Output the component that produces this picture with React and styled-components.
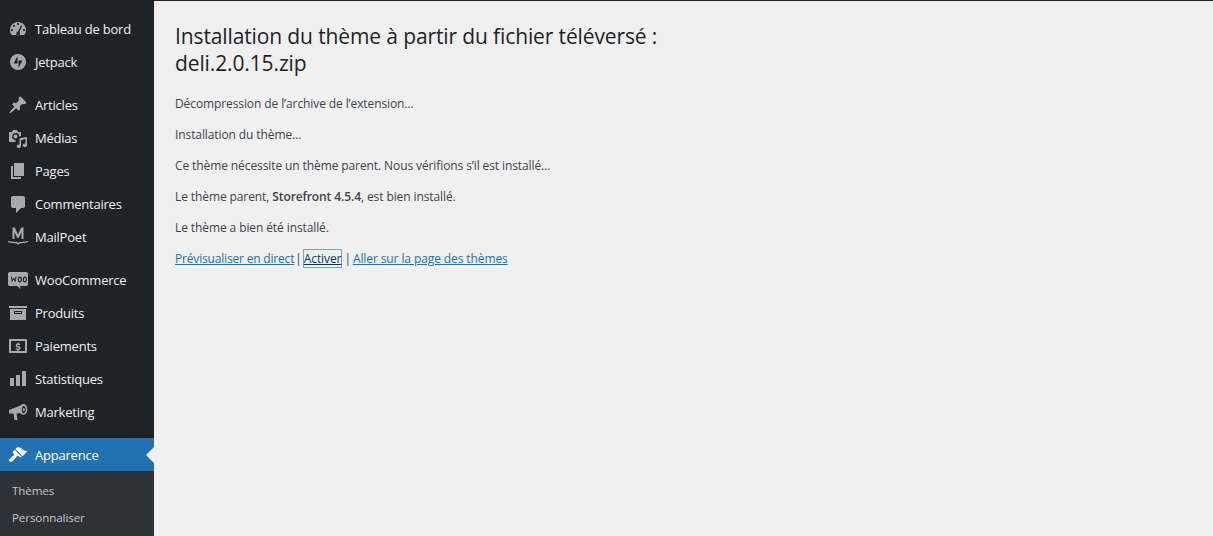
import React from 'react';
import styled, { createGlobalStyle } from 'styled-components';

const GlobalStyle = createGlobalStyle`
  html, body {
    margin: 0;
    padding: 0;
    height: 100%;
    overflow: hidden;
    background: #f0f0f1;
  }
  body {
    font-family: "Open Sans", "Noto Sans", "Liberation Sans", sans-serif;
    -webkit-font-smoothing: antialiased;
  }
`;

const Page = styled.div`
  display: flex;
  width: 1213px;
  height: 536px;
  overflow: hidden;
`;

const Sidebar = styled.nav`
  flex: 0 0 154px;
  height: 536px;
  background: #1d2327;
  padding-top: 12px;
  box-sizing: border-box;
  overflow: hidden;
`;

const MenuGroup = styled.ul`
  list-style: none;
  margin: 0 0 10px;
  padding: 0;
`;

const MenuItem = styled.li`
  position: relative;
  display: flex;
  align-items: center;
  height: 33px;
  font-size: 13px;
  letter-spacing: -0.22px;
  color: ${(p) => (p.$active ? '#fff' : '#f0f0f1')};
  background: ${(p) => (p.$active ? '#2271b1' : 'transparent')};

  ${(p) =>
    p.$active &&
    `
    &::after {
      content: '';
      position: absolute;
      right: 0;
      top: 50%;
      margin-top: -8px;
      border: 8px solid transparent;
      border-right-color: #f0f0f1;
      border-left-width: 0;
    }
  `}
`;

const IconSlot = styled.span`
  flex: 0 0 35px;
  display: flex;
  justify-content: center;
  color: ${(p) => (p.$active ? '#fff' : '#a7aaad')};

  svg {
    display: block;
    width: 20px;
    height: 20px;
    fill: currentColor;
  }
`;

const SubMenu = styled.ul`
  list-style: none;
  margin: -10px 0 0;
  padding: 6px 0 0;
  background: #2c3338;
  height: 80px;
`;

const SubItem = styled.li`
  height: 27px;
  line-height: 27px;
  padding-left: 12px;
  font-size: 11.6px;
  letter-spacing: -0.1px;
  color: #c3c4c7;
`;

const Content = styled.main`
  flex: 1;
  min-width: 0;
  border-top: 1px solid #1d2327;
  padding: 0 21px;
  color: #3c434a;
  font-size: 12px;
  letter-spacing: -0.1px;
`;

const Title = styled.h1`
  margin: 22px 0 0;
  max-width: 500px;
  font-size: 21px;
  font-weight: 400;
  letter-spacing: -0.12px;
  line-height: 27px;
  color: #1d2327;
`;

const Line = styled.p`
  margin: 0 0 13px;
  height: 18px;
  line-height: 18px;

  strong {
    font-weight: 600;
  }
`;

const Messages = styled.div`
  margin-top: 18px;
`;

const Actions = styled.p`
  display: flex;
  align-items: center;
  margin: -1px 0 0;
  height: 18px;
  color: #3c434a;
`;

const ActionLink = styled.a`
  color: #2271b1;
  text-decoration: underline;
  letter-spacing: ${(p) => (p.$tight ? '-0.18px' : '-0.1px')};
`;

const FocusedLink = styled.a`
  color: #043959;
  text-decoration: underline;
  box-shadow: 0 0 0 1px #6ea5d8;
  margin-right: 2px;
`;

const Sep = styled.span`
  padding: 0 2px 0 1px;
`;

const icons = {
  dashboard: (
    <path d="M3.760 16h12.480A7.970 7.970 0 0 0 18 11c0-4.420-3.580-8-8-8s-8 3.580-8 8c0 1.900.660 3.630 1.760 5zM10 4c.550 0 1 .450 1 1s-.450 1-1 1-1-.450-1-1 .450-1 1-1zM6 6c.550 0 1 .450 1 1s-.450 1-1 1-1-.450-1-1 .450-1 1-1zm8.010 1l-2.600 6.020c.370.360.590.860.590 1.410A2 2 0 0 1 10 16.400a2 2 0 0 1-.030-3.970L13 6.200l1.010.8zM4 10c.550 0 1 .450 1 1s-.450 1-1 1-1-.450-1-1 .450-1 1-1zm12 0c.550 0 1 .450 1 1s-.450 1-1 1-1-.450-1-1 .450-1 1-1z" fillRule="evenodd" />
  ),
  jetpack: (
    <path d="M10 2a8 8 0 1 0 0 16 8 8 0 0 0 0-16zM9.500 11.500H5.600L9.500 4v7.500zm1 4.500V8.500h3.900L10.500 16z" fillRule="evenodd" />
  ),
  pin: (
    <path d="M10.440 3.020l1.820-1.820 6.360 6.350-1.830 1.820c-1.050-.680-2.480-.570-3.410.360l-.750.750c-.920.930-1.040 2.350-.350 3.410l-1.830 1.820-2.410-2.410-2.800 2.790c-.420.420-3.380 2.710-3.800 2.290s1.860-3.390 2.280-3.810l2.790-2.790L4.100 9.360l1.830-1.820c1.050.690 2.480.570 3.400-.360l.750-.750c.930-.920 1.050-2.350.360-3.410z" />
  ),
  media: (
    <path d="M2 4h2l1-2h4l1 2h2c.6 0 1 .4 1 1v3.200c-.6-.1-1.300 0-1.900.2A3.500 3.500 0 0 0 7.500 5 3.500 3.500 0 0 0 5.600 11.400c.6.400 1.200.6 1.900.6v2H2c-.6 0-1-.4-1-1V5c0-.6.4-1 1-1zm5.500 2.500a2 2 0 1 1 0 4 2 2 0 0 1 0-4zM19 9v8.200c0 1-1 1.800-2.200 1.800s-2.100-.8-2.100-1.800 1-1.800 2.100-1.800c.2 0 .5 0 .7.100V11l-4.500 1.200v6c0 1-1 1.800-2.200 1.800S8.700 19.200 8.700 18.200s1-1.800 2.100-1.800c.3 0 .5 0 .7.100V10.300L19 9z" fillRule="evenodd" />
  ),
  pages: (
    <path d="M6 15V2h10v13H6zm-1 1h8v2H3V5h2v11z" />
  ),
  comment: (
    <path d="M5 2h10c1.100 0 2 .9 2 2v8c0 1.100-.9 2-2 2h-2l-5 5v-5H5c-1.100 0-2-.9-2-2V4c0-1.100.9-2 2-2z" />
  ),
  mailpoet: (
    <path d="M4.500 0.500h2.300L10 7.500l3.200-7H15.500V12h-2V5l-2.900 6H9.400L6.500 5v7h-2V.5zM0 14c3.500.7 7 1 9 1.100L10 16l1-.9c2-.1 5.500-.4 9-1.100v1.300c-3.500.8-6.500 1.100-8.500 1.200L10 17.800 8.500 16.500c-2-.1-5-.4-8.500-1.200V14z" />
  ),
  woo: (
    <path d="M1.800 2h16.400C19.200 2 20 2.800 20 3.800v10.400c0 1-.8 1.800-1.800 1.800H12l.6 3-3.600-3H1.800C.8 16 0 15.200 0 14.200V3.800C0 2.800.8 2 1.800 2zM2.800 6.500l1.100 6 1.700-3.300 1.700 3.300 1.400-6H7.600l-.7 3.200-1.300-2.500-1.300 2.500-.5-3.200H2.800zm9.200 0c-1.300 0-2.200 1.300-2.200 3 0 1.700.8 3 2 3 1.300 0 2.200-1.300 2.200-3 0-1.700-.8-3-2-3zm0 1.300c.6 0 .9.700.9 1.700s-.4 1.700-1 1.700-.9-.7-.9-1.700.4-1.700 1-1.700zm5-1.300c-1.300 0-2.200 1.300-2.200 3 0 1.700.8 3 2 3 1.300 0 2.200-1.300 2.200-3 0-1.700-.8-3-2-3zm0 1.300c.6 0 .9.700.9 1.700s-.4 1.700-1 1.700-.9-.7-.9-1.700.4-1.700 1-1.700z" fillRule="evenodd" />
  ),
  archive: (
    <path d="M1 3h18v2H1V3zm1 3h16v11H2V6zm4 2v3h8V8H6zm1 1h6v1H7V9z" fillRule="evenodd" />
  ),
  payments: (
    <path d="M2 3h16c.6 0 1 .4 1 1v12c0 .6-.4 1-1 1H2c-.6 0-1-.4-1-1V4c0-.6.4-1 1-1zm1 2v10h14V5H3zm6.400 1.500h1.300v1c.7.100 1.300.300 1.800.600l-.5 1.100c-.6-.3-1.200-.5-1.900-.5-.6 0-.9.200-.9.500 0 .4.400.6 1.200.8 1.300.4 2.200.8 2.200 2 0 1-.7 1.700-1.900 1.900v1H9.400v-1c-.8-.1-1.500-.3-2-.7l.5-1.100c.6.400 1.400.7 2.100.7.600 0 1-.2 1-.6s-.4-.6-1.200-.8c-1.300-.4-2.200-.9-2.200-2 0-1 .7-1.600 1.800-1.800v-1.100z" fillRule="evenodd" />
  ),
  chart: (
    <path d="M2 9h4v8H2V9zm6-3h4v11H8V6zm6-4h4v15h-4V2z" />
  ),
  megaphone: (
    <path d="M1 8l11.500-4.500C13.500 2.500 15 1.800 16.500 2.200 18.500 2.800 19.500 5.500 19.300 8c-.2 2.500-1.500 4.500-3.300 4.700-1.200.100-2.500-.500-3.500-1.500l-4 .3 1 6.500H6.500l-1-6.500H1V8zM15.800 3.900c-1.100 0-2 1.700-2 3.800s.9 3.500 2 3.500 2-1.500 2-3.600-.9-3.700-2-3.700zM15.800 6c-.6 0-1 .8-1 1.700s.4 1.700 1 1.700 1-.8 1-1.700-.4-1.700-1-1.700z" fillRule="evenodd" />
  ),
  brush: (
    <path d="M14.480 11.060L7.410 3.990l1.500-1.500c.5-.560 2.300-.470 3.510.320 1.210.8 1.430 1.280 2.910 2.100 1.180.640 2.450 1.260 4.230.910l-4.580 5.240zm-.710.710L6.700 4.700 4.930 6.470c-.390.390-.390 1.020 0 1.420l1.060 1.060c.390.390.390 1.030 0 1.420-.6.600-1.600.980-2.900 2.200-1.380 1.300-2.400 2.500-2.100 3.200.3 1.100 1.900 1.300 2.700.9.700-.3 1.900-1.400 3.200-2.800 1.200-1.300 1.600-2.300 2.200-2.900.390-.390 1.030-.390 1.420 0l1.060 1.060c.4.390 1.030.390 1.420 0l.780-.760z" />
  ),
};

function Icon({ name, active }) {
  return (
    <IconSlot $active={active}>
      <svg viewBox="0 0 20 20" aria-hidden="true">{icons[name]}</svg>
    </IconSlot>
  );
}

const groups = [
  [
    ['dashboard', 'Tableau de bord'],
    ['jetpack', 'Jetpack'],
  ],
  [
    ['pin', 'Articles'],
    ['media', 'Médias'],
    ['pages', 'Pages'],
    ['comment', 'Commentaires'],
    ['mailpoet', 'MailPoet'],
  ],
  [
    ['woo', 'WooCommerce'],
    ['archive', 'Produits'],
    ['payments', 'Paiements'],
    ['chart', 'Statistiques'],
    ['megaphone', 'Marketing'],
  ],
];

export default function App() {
  return (
    <>
      <GlobalStyle />
      <Page>
        <Sidebar>
          {groups.map((items) => (
            <MenuGroup key={items[0][0]}>
              {items.map(([icon, label]) => (
                <MenuItem key={label}>
                  <Icon name={icon} />
                  {label}
                </MenuItem>
              ))}
            </MenuGroup>
          ))}
          <MenuGroup>
            <MenuItem $active>
              <Icon name="brush" active />
              Apparence
            </MenuItem>
          </MenuGroup>
          <SubMenu>
            <SubItem>Thèmes</SubItem>
            <SubItem>Personnaliser</SubItem>
          </SubMenu>
        </Sidebar>
        <Content>
          <Title>Installation du thème à partir du fichier téléversé : deli.2.0.15.zip</Title>
          <Messages>
            <Line>Décompression de l’archive de l’extension…</Line>
            <Line>Installation du thème…</Line>
            <Line>Ce thème nécessite un thème parent. Nous vérifions s’il est installé…</Line>
            <Line>
              Le thème parent, <strong>Storefront 4.5.4</strong>, est bien installé.
            </Line>
            <Line>Le thème a bien été installé.</Line>
          </Messages>
          <Actions>
            <ActionLink $tight>Prévisualiser en direct</ActionLink>
            <Sep>|</Sep>
            <FocusedLink>Activer</FocusedLink>
            <Sep>|</Sep>
            <ActionLink>Aller sur la page des thèmes</ActionLink>
          </Actions>
        </Content>
      </Page>
    </>
  );
}
